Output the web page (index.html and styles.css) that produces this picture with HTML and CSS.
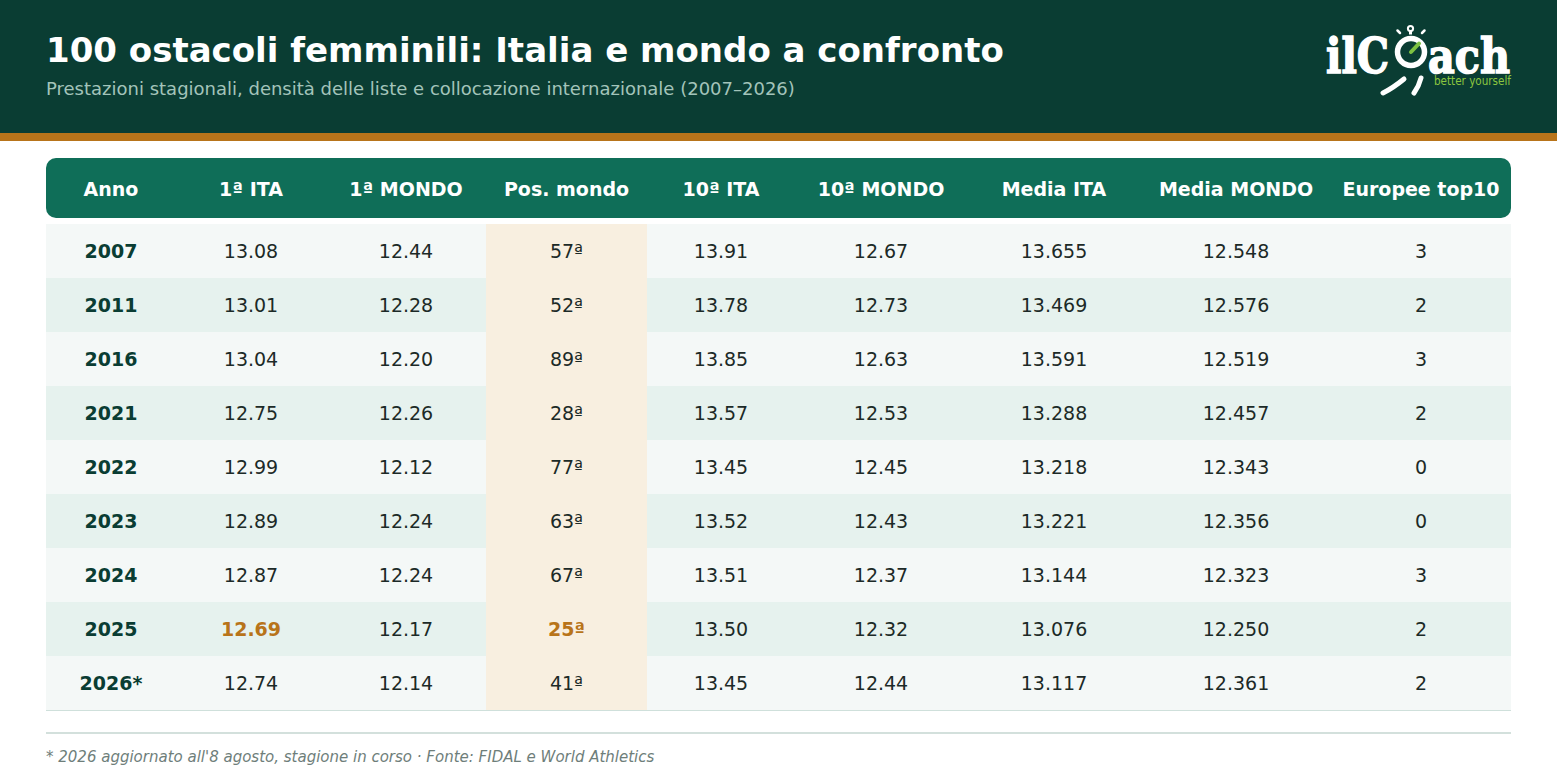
FILE: index.html
```html
<!DOCTYPE html>
<html lang="it">
<head>
<meta charset="utf-8">
<title>100 ostacoli femminili</title>
<link rel="stylesheet" href="styles.css">
</head>
<body>
<header class="top">
  <div class="titles">
    <h1 class="title">100 ostacoli femminili: Italia e mondo a confronto</h1>
    <p class="subtitle">Prestazioni stagionali, densità delle liste e collocazione internazionale (2007–2026)</p>
  </div>
  <svg class="logo" width="186" height="76" viewBox="0 0 186 76" xmlns="http://www.w3.org/2000/svg">
    <text x="1" y="51" class="logo-word" textLength="63" lengthAdjust="spacingAndGlyphs">ilC</text>
    <circle cx="86" cy="30" r="13.5" fill="none" stroke="#fff" stroke-width="5.5"/>
    <circle cx="85.5" cy="6.5" r="2.6" fill="none" stroke="#fff" stroke-width="2"/>
    <rect x="84" y="8.5" width="3" height="4" fill="#fff"/>
    <path d="M75 11 l-2.5 -2.5 M97 11 l2.5 -2.5" stroke="#fff" stroke-width="2.5" stroke-linecap="round"/>
    <path d="M86 30 L94 21.5" stroke="#7dc242" stroke-width="4" stroke-linecap="round"/>
    <path d="M58 71 Q68 66 79 57" stroke="#fff" stroke-width="5" fill="none" stroke-linecap="round"/>
    <path d="M89 71 Q94 64 96 56" stroke="#fff" stroke-width="5" fill="none" stroke-linecap="round"/>
    <text x="103" y="51" class="logo-word" textLength="82" lengthAdjust="spacingAndGlyphs">ach</text>
    <text x="109" y="62.5" class="logo-tag" textLength="77" lengthAdjust="spacingAndGlyphs">better yourself</text>
  </svg>
</header>
<main class="content">
  <div class="table">
    <div class="thead">
      <div class="c">Anno</div>
      <div class="c">1ª ITA</div>
      <div class="c">1ª MONDO</div>
      <div class="c">Pos. mondo</div>
      <div class="c">10ª ITA</div>
      <div class="c">10ª MONDO</div>
      <div class="c">Media ITA</div>
      <div class="c">Media MONDO</div>
      <div class="c">Europee top10</div>
    </div>
    <div class="tbody">
      <div class="row"><div class="c year">2007</div><div class="c">13.08</div><div class="c">12.44</div><div class="c pos">57ª</div><div class="c">13.91</div><div class="c">12.67</div><div class="c">13.655</div><div class="c">12.548</div><div class="c">3</div></div>
      <div class="row"><div class="c year">2011</div><div class="c">13.01</div><div class="c">12.28</div><div class="c pos">52ª</div><div class="c">13.78</div><div class="c">12.73</div><div class="c">13.469</div><div class="c">12.576</div><div class="c">2</div></div>
      <div class="row"><div class="c year">2016</div><div class="c">13.04</div><div class="c">12.20</div><div class="c pos">89ª</div><div class="c">13.85</div><div class="c">12.63</div><div class="c">13.591</div><div class="c">12.519</div><div class="c">3</div></div>
      <div class="row"><div class="c year">2021</div><div class="c">12.75</div><div class="c">12.26</div><div class="c pos">28ª</div><div class="c">13.57</div><div class="c">12.53</div><div class="c">13.288</div><div class="c">12.457</div><div class="c">2</div></div>
      <div class="row"><div class="c year">2022</div><div class="c">12.99</div><div class="c">12.12</div><div class="c pos">77ª</div><div class="c">13.45</div><div class="c">12.45</div><div class="c">13.218</div><div class="c">12.343</div><div class="c">0</div></div>
      <div class="row"><div class="c year">2023</div><div class="c">12.89</div><div class="c">12.24</div><div class="c pos">63ª</div><div class="c">13.52</div><div class="c">12.43</div><div class="c">13.221</div><div class="c">12.356</div><div class="c">0</div></div>
      <div class="row"><div class="c year">2024</div><div class="c">12.87</div><div class="c">12.24</div><div class="c pos">67ª</div><div class="c">13.51</div><div class="c">12.37</div><div class="c">13.144</div><div class="c">12.323</div><div class="c">3</div></div>
      <div class="row"><div class="c year">2025</div><div class="c hl">12.69</div><div class="c">12.17</div><div class="c pos hl">25ª</div><div class="c">13.50</div><div class="c">12.32</div><div class="c">13.076</div><div class="c">12.250</div><div class="c">2</div></div>
      <div class="row"><div class="c year">2026*</div><div class="c">12.74</div><div class="c">12.14</div><div class="c pos">41ª</div><div class="c">13.45</div><div class="c">12.44</div><div class="c">13.117</div><div class="c">12.361</div><div class="c">2</div></div>
    </div>
  </div>
  <p class="note">* 2026 aggiornato all'8 agosto, stagione in corso · Fonte: FIDAL e World Athletics</p>
</main>
</body>
</html>
```

FILE: styles.css
```css
* { box-sizing: border-box; }
html, body { margin: 0; padding: 0; }
body {
  font-family: "DejaVu Sans", "Liberation Sans", sans-serif;
  background: #ffffff;
  width: 1557px;
  height: 778px;
  overflow: hidden;
}
.top {
  height: 141px;
  background: #0a3d33;
  border-bottom: 8px solid #b8741a;
  padding: 0 46px;
  display: flex;
  justify-content: space-between;
  align-items: flex-start;
}
.titles { padding-top: 29px; }
.title {
  margin: 0;
  font-size: 34px;
  font-weight: bold;
  color: #ffffff;
  line-height: 42px;
}
.subtitle {
  margin: 6px 0 0;
  font-size: 18px;
  color: #a3c4ba;
  line-height: 24px;
}
.logo { margin-top: 22px; display: block; overflow: visible; }
.logo-word {
  font-family: "DejaVu Serif", serif;
  font-weight: bold;
  font-size: 49px;
  fill: #ffffff;
  stroke: #ffffff;
  stroke-width: 1.6px;
}
.logo-tag {
  font-family: "DejaVu Sans", sans-serif;
  font-size: 11.5px;
  fill: #8cc63f;
}
.content { padding: 17px 46px 0; }
.table { width: 1465px; }
.thead, .row {
  display: grid;
  grid-template-columns: 130px 150px 160px 161px 148px 172px 174px 190px 180px;
}
.thead {
  height: 60px;
  background: #0f6e58;
  border-radius: 10px;
  color: #ffffff;
  font-weight: bold;
  font-size: 19px;
  margin-bottom: 6px;
  padding-top: 1px;
}
.c {
  display: flex;
  align-items: center;
  justify-content: center;
}
.tbody { border-bottom: 1px solid #cfe0db; }
.row {
  height: 54px;
  font-size: 19px;
  color: #1c2a27;
  background: #f4f8f7;
}
.row:nth-child(even) { background: #e6f2ee; }
.row .pos { background: #f8efe0; }
.row .year { font-weight: bold; color: #0a3d33; }
.row .hl { font-weight: bold; color: #b8741a; }
.note {
  margin: 21px 0 0;
  border-top: 2px solid #d3e0dc;
  padding-top: 14px;
  font-size: 15px;
  font-style: italic;
  color: #6e7e7a;
  line-height: 18px;
}
```
